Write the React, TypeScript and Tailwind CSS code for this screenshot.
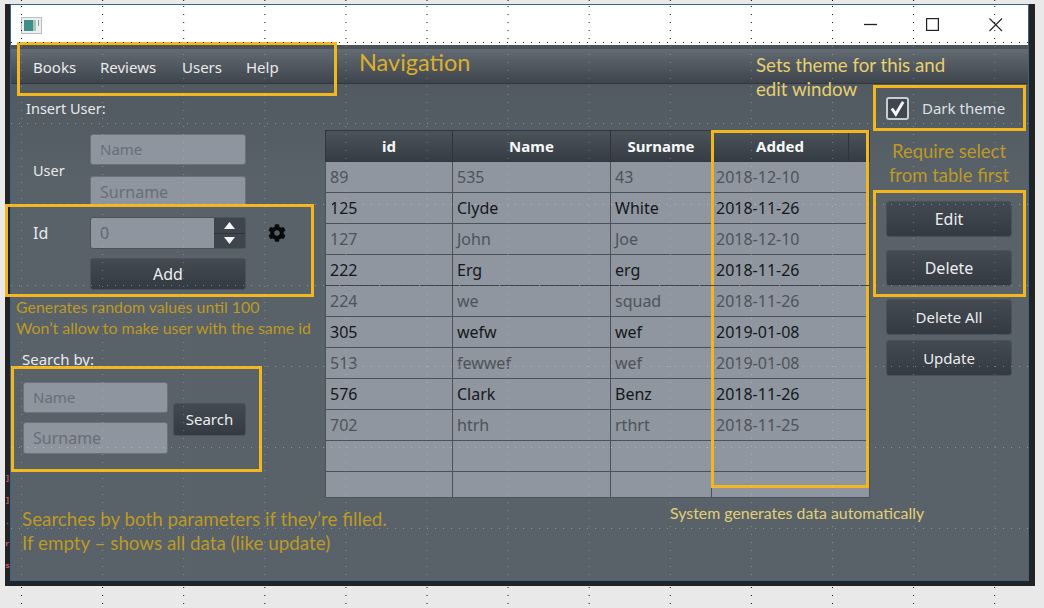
import React from "react";
import { FaCog } from "react-icons/fa";

const rows: [string, string, string, string, boolean][] = [
  ["89", "535", "43", "2018-12-10", false],
  ["125", "Clyde", "White", "2018-11-26", true],
  ["127", "John", "Joe", "2018-12-10", false],
  ["222", "Erg", "erg", "2018-11-26", true],
  ["224", "we", "squad", "2018-11-26", false],
  ["305", "wefw", "wef", "2019-01-08", true],
  ["513", "fewwef", "wef", "2019-01-08", false],
  ["576", "Clark", "Benz", "2018-11-26", true],
  ["702", "htrh", "rthrt", "2018-11-25", false],
  ["", "", "", "", false],
];

const gridXs = Array.from({ length: 13 }, (_, k) => 21.5 + 81.1 * k);
const gridYs = [42.5, 123.5, 204.5, 285.5, 366.5, 447.5, 528.5];

function Field({ text, className = "" }: { text: string; className?: string }) {
  return (
    <div className={`flex h-[31px] items-center rounded-[3px] border border-[#6b727a] bg-[#8e959e] pl-[9px] text-[#676e76] ${className}`}>
      {text}
    </div>
  );
}

function Btn({ text, className = "" }: { text: string; className?: string }) {
  return (
    <button className={`flex items-center justify-center rounded-[3px] border border-[#4b5259] bg-gradient-to-b from-[#434a51] to-[#343a41] text-[#ecedee] ${className}`}>
      {text}
    </button>
  );
}

function Box({ className }: { className: string }) {
  return <div className={`pointer-events-none absolute border-[3px] border-[#f2b71e] ${className}`} />;
}

function Cell({ text, dark, w }: { text: string; dark: boolean; w: string }) {
  return (
    <div className={`flex items-center border-r border-[#4a525a] pl-[4px] ${w} ${dark ? "text-[#14181c]" : "text-[#4d5359]"}`}>
      {text}
    </div>
  );
}

export default function App() {
  return (
    <div className="relative h-[608px] w-[1044px] overflow-hidden bg-[#e9e9e9] pl-[5px] pt-[4px] font-['Noto_Sans',sans-serif] text-[15px]">
      <div className="h-[582px] w-[1030px] bg-[#232323] pb-[5px] pl-[5px] pr-[6px]">
        <div className="flex h-full flex-col border border-[#35648e] bg-[#596169]">
          {/* title bar */}
          <div className="flex h-[40px] shrink-0 items-center justify-between bg-white pl-[10px] pr-[1px]">
            <svg width="21" height="17" viewBox="0 0 21 17">
              <rect x="0.5" y="0.5" width="20" height="16" fill="#eceff0" stroke="#b9bdc0" />
              <rect x="3" y="3" width="9" height="11" fill="#3f8f85" />
              <rect x="12" y="3" width="3" height="11" fill="#a9c4c0" />
              <rect x="17" y="3" width="1" height="6" fill="#8d9498" />
            </svg>
            <div className="flex">
              {[
                <path key="a" d="M0 6.5H13" stroke="#222" strokeWidth="1.3" fill="none" />,
                <rect key="b" x="0.6" y="0.6" width="11.8" height="11.8" stroke="#222" strokeWidth="1.2" fill="none" />,
                <path key="c" d="M0.5 0.5L13 13M13 0.5L0.5 13" stroke="#222" strokeWidth="1.1" fill="none" />,
              ].map((p, i) => (
                <div key={i} className="flex h-[40px] w-[62.5px] items-center justify-center">
                  <svg width="14" height="14" viewBox="0 0 14 14">{p}</svg>
                </div>
              ))}
            </div>
          </div>

          {/* menu bar */}
          <div className="flex h-[39px] shrink-0 border-b border-[#32373d] bg-[#4b5259] pt-[4px]">
            <div className="flex h-full w-full items-center bg-gradient-to-b from-[#636b73] to-[#3f454c] pl-[22px] pt-[2px] text-[15px] text-[#e9eaeb]">
              <span className="w-[67px]">Books</span>
              <span className="w-[82px]">Reviews</span>
              <span className="w-[64px]">Users</span>
              <span className="w-[113px]">Help</span>
              <span className="-translate-y-[4px] font-['Lato',sans-serif] text-[23.5px] text-[#dcae2c]">Navigation</span>
            </div>
          </div>

          {/* body */}
          <div className="flex flex-1 bg-gradient-to-b from-[#515961] to-[#596169] to-[20%] text-[16px] text-[#e9eaeb]">
            {/* left */}
            <div className="flex w-[314px] shrink-0 flex-col">
              <p className="ml-[15px] mt-[12px] h-[24px] text-[14.5px] leading-[24px]">Insert User:</p>
              <div className="ml-[22px] mt-[14px] flex items-center">
                <span className="w-[57px] text-[14.5px]">User</span>
                <div className="flex w-[156px] flex-col gap-[11px]">
                  <Field text="Name" className="text-[15px]" />
                  <Field text="Surname" />
                </div>
              </div>
              <div className="ml-[22px] mt-[10px] flex items-center">
                <span className="w-[57px]">Id</span>
                <div className="flex h-[32px] w-[156px] overflow-hidden rounded-[3px] border border-[#4b5259]">
                  <div className="flex flex-1 items-center bg-[#8e959e] pl-[9px] text-[#5f666e]">0</div>
                  <div className="flex w-[31px] flex-col gap-px bg-[#2f343a]">
                    <div className="flex flex-1 items-center justify-center bg-[#3e454c]">
                      <svg width="11" height="7" viewBox="0 0 11 7"><path d="M5.5 0L11 7H0Z" fill="#f2f3f4" /></svg>
                    </div>
                    <div className="flex flex-1 items-center justify-center bg-[#3e454c]">
                      <svg width="11" height="7" viewBox="0 0 11 7"><path d="M0 0H11L5.5 7Z" fill="#f2f3f4" /></svg>
                    </div>
                  </div>
                </div>
                <FaCog className="ml-[22px] text-[18px] text-[#0a0a0a]" />
              </div>
              <Btn text="Add" className="ml-[79px] mt-[9px] h-[32px] w-[156px]" />
              <div className="ml-[5px] mt-[6px] whitespace-nowrap font-['Lato',sans-serif] text-[15.9px] leading-[21px] text-[#bd9a24]">
                <p>Generates random values until 100</p>
                <p>Won’t allow to make user with the same id</p>
              </div>
              <p className="ml-[11px] mt-[9px] h-[24px] text-[15px] leading-[24px]">Search by:</p>
              <div className="ml-[12px] mt-[11px] flex items-center">
                <div className="flex w-[145px] flex-col gap-[9px]">
                  <Field text="Name" className="text-[15px]" />
                  <Field text="Surname" className="h-[32px]" />
                </div>
                <Btn text="Search" className="ml-[5px] mt-[3px] h-[33px] w-[73px] text-[15px]" />
              </div>
              <div className="ml-[11px] mt-[53px] w-[400px] font-['Lato',sans-serif] text-[18.8px] leading-[24px] text-[#bd9a24]">
                <p>Searches by both parameters if they’re filled.</p>
                <p>If empty – shows all data (like update)</p>
              </div>
            </div>

            {/* table */}
            <div className="flex w-[545px] shrink-0 flex-col pt-[46px]">
              <div className="flex h-[32px] border border-[#32373d] bg-gradient-to-b from-[#4b535b] to-[#363c43] text-[15px] font-bold text-[#f7f8f8]">
                <div className="flex w-[127px] items-center justify-center border-r border-[#2f343a]">id</div>
                <div className="flex w-[158px] items-center justify-center border-r border-[#2f343a]">Name</div>
                <div className="flex w-[101px] items-center justify-center border-r border-[#2f343a]">Surname</div>
                <div className="flex w-[137px] items-center justify-center border-r border-[#2f343a]">Added</div>
                <div className="flex-1" />
              </div>
              <div className="border-b border-l border-r border-[#4a525a] bg-[#8f969f]">
                {rows.map((r, i) => (
                  <div key={i} className="flex h-[31px] border-b border-[#4a525a]">
                    <Cell text={r[0]} dark={r[4]} w="w-[127px]" />
                    <Cell text={r[1]} dark={r[4]} w="w-[158px]" />
                    <Cell text={r[2]} dark={r[4]} w="w-[101px]" />
                    <div className={`flex flex-1 items-center pl-[4px] ${r[4] ? "text-[#14181c]" : "text-[#4d5359]"}`}>{r[3]}</div>
                  </div>
                ))}
                <div className="flex h-[25px]">
                  <div className="w-[127px] border-r border-[#4a525a]" />
                  <div className="w-[158px] border-r border-[#4a525a]" />
                  <div className="w-[101px] border-r border-[#4a525a]" />
                </div>
              </div>
              <p className="ml-[345px] mt-[5px] whitespace-nowrap font-['Lato',sans-serif] text-[15.9px] leading-[20px] text-[#e2d077]">
                System generates data automatically
              </p>
            </div>

            {/* right */}
            <div className="flex flex-1 flex-col pl-[16px]">
              <div className="mt-[13px] flex h-[22px] items-center">
                <div className="flex h-[23px] w-[23px] items-center justify-center rounded-[3px] border-2 border-[#c9cdd1] bg-[#3f464d]">
                  <svg width="17" height="17" viewBox="0 0 15 15">
                    <path d="M2.5 7.5L6 12.5L12.5 1.5" stroke="#f4f5f6" strokeWidth="2.6" fill="none" />
                  </svg>
                </div>
                <span className="ml-[13px] text-[15px] text-[#dfe1e3]">Dark theme</span>
              </div>
              <div className="mt-[20px] w-[126px] whitespace-nowrap text-center font-['Lato',sans-serif] text-[18.5px] leading-[24px] text-[#bd9a24]">
                <p>Require select</p>
                <p>from table first</p>
              </div>
              <Btn text="Edit" className="mt-[14px] h-[36px] w-[126px]" />
              <Btn text="Delete" className="mt-[13px] h-[36px] w-[126px]" />
              <Btn text="Delete All" className="mt-[13px] h-[36px] w-[126px] text-[15px]" />
              <Btn text="Update" className="mt-[5px] h-[36px] w-[126px] text-[15px]" />
            </div>
          </div>
        </div>
      </div>

      {/* annotation overlays */}
      <div className="absolute left-[756px] top-[53px] font-['Lato',sans-serif] text-[18.7px] leading-[24px] text-[#e6d070]">
        <p>Sets theme for this and</p>
        <p>edit window</p>
      </div>
      <Box className="left-[17px] top-[42px] h-[54px] w-[320px]" />
      <Box className="left-[5px] top-[204px] h-[93px] w-[309px]" />
      <Box className="left-[11px] top-[366px] h-[106px] w-[251px]" />
      <Box className="left-[873px] top-[85px] h-[46px] w-[153px]" />
      <Box className="left-[873px] top-[190px] h-[107px] w-[153px]" />
      <Box className="left-[711px] top-[130px] h-[358px] w-[158px]" />

      {/* terminal text visible behind the window */}
      <div className="absolute left-[5px] top-[467px] font-['Liberation_Mono',monospace] text-[8px] font-bold leading-[22px] text-[#c96060]">
        <p>]</p>
        <p>]</p>
        <p>.</p>
        <p>r</p>
        <p>s</p>
      </div>

      {/* alignment grid dots */}
      <svg className="pointer-events-none absolute left-0 top-0" width="1044" height="608">
        {gridXs.map((x) => (
          <g key={x}>
            <path d={`M${x} 0V5M${x} 6V45M${x} 587V608`} stroke="#111" strokeDasharray="1 7" fill="none" />
            <path d={`M${x} 46V581`} stroke="#fff" strokeOpacity="0.3" strokeDasharray="1 7" fill="none" />
          </g>
        ))}
        {gridYs.map((y) => (
          <path
            key={y}
            d={`M11 ${y}H1028`}
            stroke={y < 46 ? "#111" : "#fff"}
            strokeOpacity={y < 46 ? 1 : 0.35}
            strokeDasharray="1 7"
            fill="none"
          />
        ))}
        <path d="M325 285.5H870" stroke="#3c4249" strokeDasharray="4 1" fill="none" />
      </svg>
    </div>
  );
}
